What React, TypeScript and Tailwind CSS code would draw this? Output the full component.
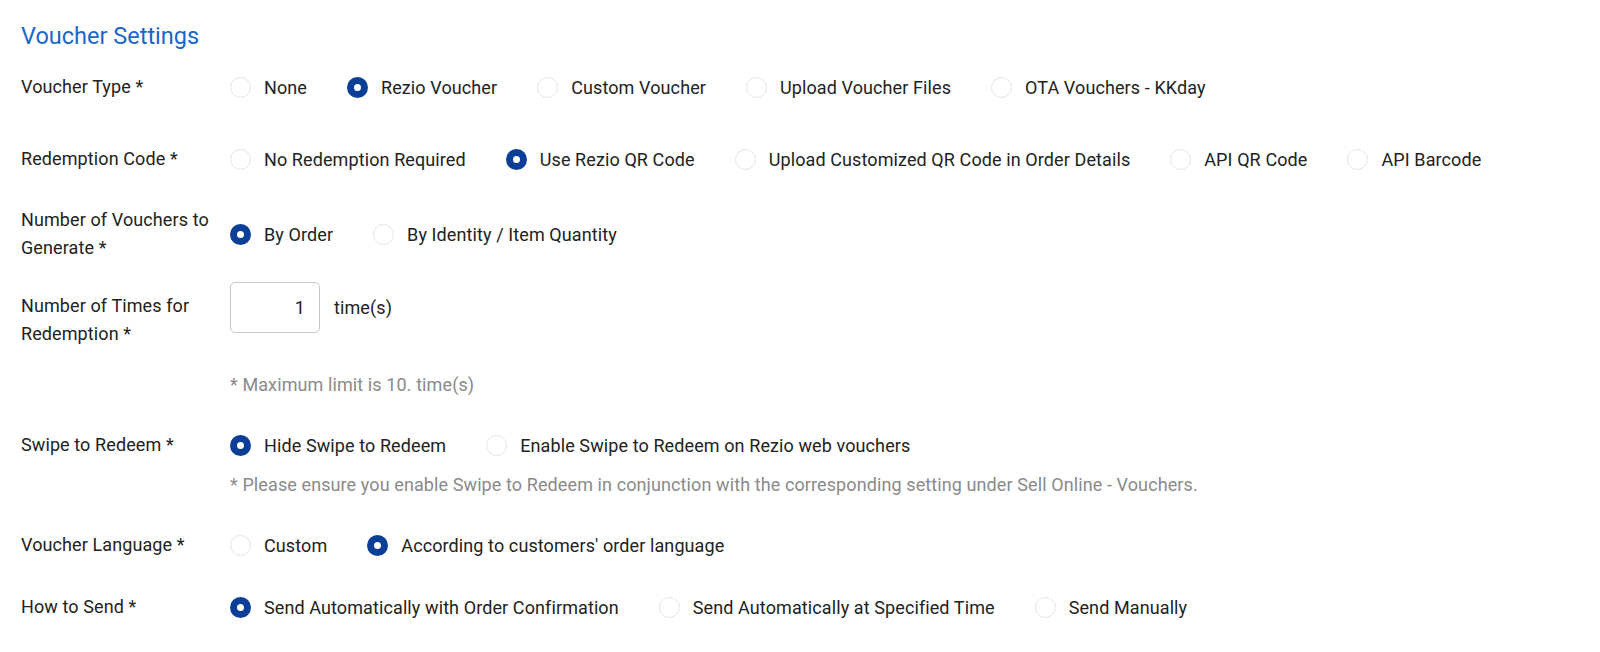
import React from "react";

type Opt = { label: string; checked?: boolean };

function Radio({ checked }: { checked?: boolean }) {
  return checked ? (
    <span className="w-[21px] h-[21px] rounded-full border-[7px] border-[#0b3e96] bg-white shrink-0" />
  ) : (
    <span className="w-[21px] h-[21px] rounded-full border border-[#e3e3e3] bg-white shrink-0" />
  );
}

function RadioGroup({ options }: { options: Opt[] }) {
  return (
    <div className="flex items-center gap-[40px]">
      {options.map((o) => (
        <label key={o.label} className="flex items-center gap-[13px] whitespace-nowrap">
          <Radio checked={o.checked} />
          <span>{o.label}</span>
        </label>
      ))}
    </div>
  );
}

function Label({ children }: { children: React.ReactNode }) {
  return <div className="w-[197px] shrink-0 leading-[28px]">{children}</div>;
}

export default function App() {
  return (
    <div className="min-h-screen bg-white text-[#222222] text-[18px] tracking-[0.1px] font-[Roboto,sans-serif] pl-[21px] pt-[22px]">
      <h2 className="text-[23.5px] leading-[28px] tracking-normal text-[#1b66c9]">Voucher Settings</h2>

      {/* Voucher Type */}
      <div className="flex items-center gap-3 h-[40px] mt-[17px]">
        <Label>Voucher Type *</Label>
        <RadioGroup
          options={[
            { label: "None" },
            { label: "Rezio Voucher", checked: true },
            { label: "Custom Voucher" },
            { label: "Upload Voucher Files" },
            { label: "OTA Vouchers - KKday" },
          ]}
        />
      </div>

      {/* Redemption Code */}
      <div className="flex items-center gap-3 h-[40px] mt-[32px]">
        <Label>Redemption Code *</Label>
        <RadioGroup
          options={[
            { label: "No Redemption Required" },
            { label: "Use Rezio QR Code", checked: true },
            { label: "Upload Customized QR Code in Order Details" },
            { label: "API QR Code" },
            { label: "API Barcode" },
          ]}
        />
      </div>

      {/* Number of Vouchers */}
      <div className="flex items-center gap-3 mt-[27px]">
        <Label>Number of Vouchers to Generate *</Label>
        <RadioGroup
          options={[{ label: "By Order", checked: true }, { label: "By Identity / Item Quantity" }]}
        />
      </div>

      {/* Number of Times */}
      <div className="flex items-start gap-3 mt-[20px]">
        <div className="pt-[10px]">
          <Label>Number of Times for Redemption *</Label>
        </div>
        <div className="flex flex-col">
          <div className="flex items-center gap-[14px]">
            <div className="w-[90px] h-[51px] border border-[#c8c8c8] rounded-[5px] flex items-center justify-end pr-[14px]">
              1
            </div>
            <span>time(s)</span>
          </div>
          <div className="mt-[38px] leading-[28px] text-[#8a8a8a]">* Maximum limit is 10. time(s)</div>
        </div>
      </div>

      {/* Swipe to Redeem */}
      <div className="flex items-start gap-3 mt-[32px]">
        <Label>Swipe to Redeem *</Label>
        <div className="flex flex-col">
          <div className="h-[28px] flex items-center">
            <RadioGroup
              options={[
                { label: "Hide Swipe to Redeem", checked: true },
                { label: "Enable Swipe to Redeem on Rezio web vouchers" },
              ]}
            />
          </div>
          <div className="mt-[12px] leading-[28px] text-[#8a8a8a]">
            * Please ensure you enable Swipe to Redeem in conjunction with the corresponding setting under Sell Online - Vouchers.
          </div>
        </div>
      </div>

      {/* Voucher Language */}
      <div className="flex items-center gap-3 h-[28px] mt-[32px]">
        <Label>Voucher Language *</Label>
        <RadioGroup
          options={[{ label: "Custom" }, { label: "According to customers' order language", checked: true }]}
        />
      </div>

      {/* How to Send */}
      <div className="flex items-center gap-3 h-[28px] mt-[34px]">
        <Label>How to Send *</Label>
        <RadioGroup
          options={[
            { label: "Send Automatically with Order Confirmation", checked: true },
            { label: "Send Automatically at Specified Time" },
            { label: "Send Manually" },
          ]}
        />
      </div>
    </div>
  );
}
